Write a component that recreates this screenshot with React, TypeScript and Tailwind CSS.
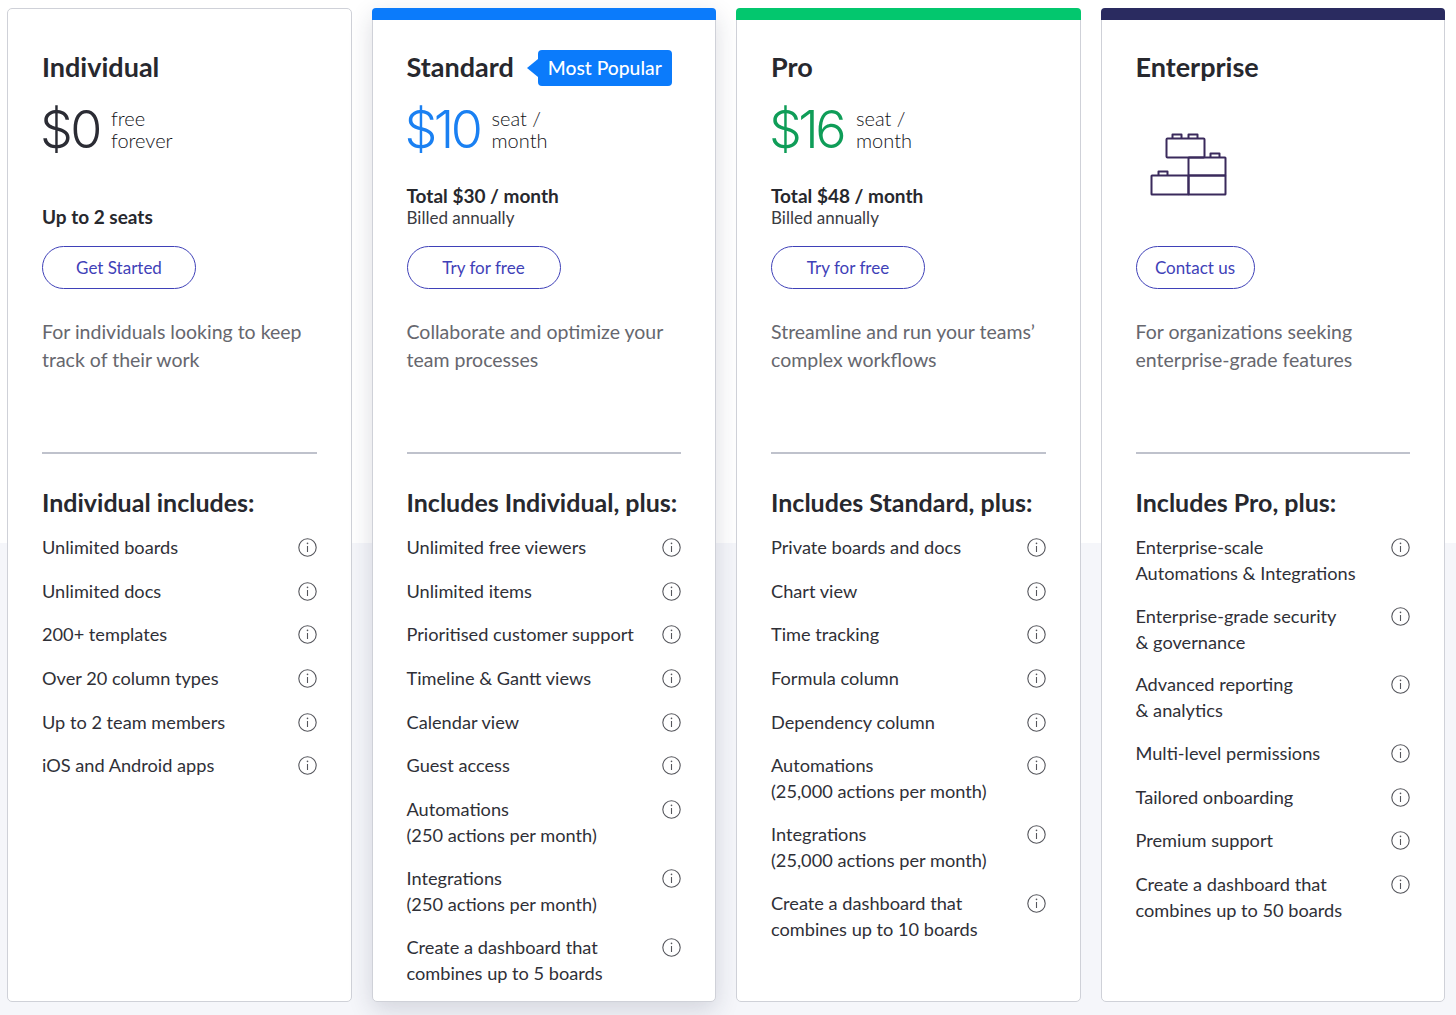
import React from "react";

type Plan = {
  name: string;
  bar: string;
  popular?: boolean;
  price?: string;
  priceClass?: string;
  unit?: string[];
  total?: string;
  billed?: string;
  cta: string;
  ctaWidth: string;
  desc: string[];
  heading: string;
  items: string[][];
};

const plans: Plan[] = [
  {
    name: "Individual",
    bar: "bg-transparent",
    price: "$0",
    priceClass: "text-[#2b2c34] w-[71px] ml-[-2px] tracking-[-2.5px]",
    unit: ["free", "forever"],
    total: "Up to 2 seats",
    cta: "Get Started",
    ctaWidth: "w-[154px]",
    desc: ["For individuals looking to keep", "track of their work"],
    heading: "Individual includes:",
    items: [["Unlimited boards"], ["Unlimited docs"], ["200+ templates"], ["Over 20 column types"], ["Up to 2 team members"], ["iOS and Android apps"]],
  },
  {
    name: "Standard",
    bar: "bg-[#0b7bfb]",
    popular: true,
    price: "$10",
    priceClass: "text-[#1a80f2] w-[87px] ml-[-2px] tracking-[-3.5px]",
    unit: ["seat /", "month"],
    total: "Total $30 / month",
    billed: "Billed annually",
    cta: "Try for free",
    ctaWidth: "w-[154px]",
    desc: ["Collaborate and optimize your", "team processes"],
    heading: "Includes Individual, plus:",
    items: [
      ["Unlimited free viewers"],
      ["Unlimited items"],
      ["Prioritised customer support"],
      ["Timeline & Gantt views"],
      ["Calendar view"],
      ["Guest access"],
      ["Automations", "(250 actions per month)"],
      ["Integrations", "(250 actions per month)"],
      ["Create a dashboard that", "combines up to 5 boards"],
    ],
  },
  {
    name: "Pro",
    bar: "bg-[#03c76e]",
    price: "$16",
    priceClass: "text-[#0f9d58] w-[87px] ml-[-2px] tracking-[-3.5px]",
    unit: ["seat /", "month"],
    total: "Total $48 / month",
    billed: "Billed annually",
    cta: "Try for free",
    ctaWidth: "w-[154px]",
    desc: ["Streamline and run your teams’", "complex workflows"],
    heading: "Includes Standard, plus:",
    items: [
      ["Private boards and docs"],
      ["Chart view"],
      ["Time tracking"],
      ["Formula column"],
      ["Dependency column"],
      ["Automations", "(25,000 actions per month)"],
      ["Integrations", "(25,000 actions per month)"],
      ["Create a dashboard that", "combines up to 10 boards"],
    ],
  },
  {
    name: "Enterprise",
    bar: "bg-[#2a2b60]",
    cta: "Contact us",
    ctaWidth: "w-[119px]",
    desc: ["For organizations seeking", "enterprise-grade features"],
    heading: "Includes Pro, plus:",
    items: [
      ["Enterprise-scale", "Automations & Integrations"],
      ["Enterprise-grade security", "& governance"],
      ["Advanced reporting", "& analytics"],
      ["Multi-level permissions"],
      ["Tailored onboarding"],
      ["Premium support"],
      ["Create a dashboard that", "combines up to 50 boards"],
    ],
  },
];

function InfoIcon() {
  return (
    <svg width="19" height="19" viewBox="0 0 19 19" fill="none" className="shrink-0 mt-1">
      <circle cx="9.5" cy="9.5" r="8.7" stroke="#55565c" strokeWidth="1.1" />
      <line x1="9.5" y1="8" x2="9.5" y2="14" stroke="#55565c" strokeWidth="1.1" />
      <circle cx="9.5" cy="5.4" r="0.8" fill="#55565c" />
    </svg>
  );
}

function Blocks() {
  return (
    <svg width="78" height="64" viewBox="0 0 78 64" fill="none" stroke="#3a2a5c" strokeWidth="2" strokeLinejoin="round" className="ml-[14px] mt-[34px]">
      <rect x="16.5" y="5.5" width="38" height="19" rx="1" />
      <path d="M22.5 5.5V1.5H31.5V5.5M38.5 5.5V1.5H47.5V5.5" />
      <rect x="38.5" y="24.5" width="37" height="18" rx="0.5" />
      <path d="M60.5 24.5V20.5H69.5V24.5" />
      <rect x="38.5" y="42.5" width="37" height="19" rx="0.5" />
      <rect x="1.5" y="42.5" width="37" height="19" rx="0.5" />
      <path d="M8.5 42.5V38.5H17.5V42.5" />
    </svg>
  );
}

function Card({ plan }: { plan: Plan }) {
  return (
    <div
      className={`h-[994px] rounded-[5px] border border-[#cfd1d8] bg-white flex flex-col ${
        plan.popular ? "shadow-[0_8px_24px_rgba(30,40,70,0.16)]" : ""
      }`}
    >
      <div className={`h-3 rounded-t-[4px] mx-[-1px] mt-[-1px] ${plan.bar}`} />
      <div className="px-[34px] flex flex-col">
        <div className="h-9 mt-[29px] flex items-center">
          <h2 className="text-[27px] leading-9 font-bold text-[#27282e]">{plan.name}</h2>
          {plan.popular && (
            <div className="relative ml-[24px] h-9 rounded-[4px] bg-[#0b7bfb] text-white text-[19.3px] leading-9 font-medium px-[10px] mt-[2px] whitespace-nowrap">
              <span className="absolute left-[-11px] top-[9px] w-0 h-0 border-y-[9px] border-y-transparent border-r-[11px] border-r-[#0b7bfb]" />
              Most Popular
            </div>
          )}
        </div>

        {plan.price ? (
          <>
            <div className="h-[58px] mt-[14px] flex items-center">
              <span className={`pt-1 text-[52px] leading-[58px] font-light font-['Inter',sans-serif] shrink-0 ${plan.priceClass}`}>{plan.price}</span>
              <div className="mt-px text-[20px] leading-[22px] font-light text-[#111217]">
                {plan.unit?.map((u) => <div key={u}>{u}</div>)}
              </div>
            </div>
            <div className={`h-11 mt-[28px] flex flex-col justify-end ${plan.billed ? "" : "pb-px"}`}>
              <div className="text-[19px] leading-[22px] font-bold text-[#27282e]">{plan.total}</div>
              {plan.billed && <div className="text-[17px] leading-[22px] text-[#3a3b42]">{plan.billed}</div>}
            </div>
          </>
        ) : (
          <div className="h-[130px] mt-[14px]">
            <Blocks />
          </div>
        )}

        <button className={`${plan.ctaWidth} h-[43px] mt-[17px] rounded-full border border-[#3f41b8] text-[#3f41b8] text-[17px]`}>
          {plan.cta}
        </button>

        <p className="mt-[29px] h-14 text-[19.5px] leading-7 text-[#66676e] whitespace-nowrap">
          {plan.desc[0]}
          <br />
          {plan.desc[1]}
        </p>

        <div className="mt-[78px] h-[2px] bg-[#bfc2cc]" />

        <h3 className="mt-[32px] text-[25px] leading-8 font-bold text-[#27282e] whitespace-nowrap">{plan.heading}</h3>

        <ul className="mt-[16px] flex flex-col gap-[16.7px]">
          {plan.items.map((it) => (
            <li key={it.join()} className="min-h-[27px] flex justify-between items-start text-[18.2px] leading-[26px] text-[#2f3037] whitespace-nowrap">
              <span>
                {it[0]}
                {it[1] && (
                  <>
                    <br />
                    {it[1]}
                  </>
                )}
              </span>
              <InfoIcon />
            </li>
          ))}
        </ul>
      </div>
    </div>
  );
}

export default function App() {
  return (
    <div className="h-[1015px] overflow-hidden bg-[linear-gradient(to_bottom,#ffffff_543px,#f5f6fa_543px)] pt-[8px] pl-[7px] pr-[11px] font-['Lato','Noto_Sans',sans-serif]">
      <div className="grid grid-cols-4 gap-5">
        {plans.map((p) => (
          <Card key={p.name} plan={p} />
        ))}
      </div>
    </div>
  );
}
